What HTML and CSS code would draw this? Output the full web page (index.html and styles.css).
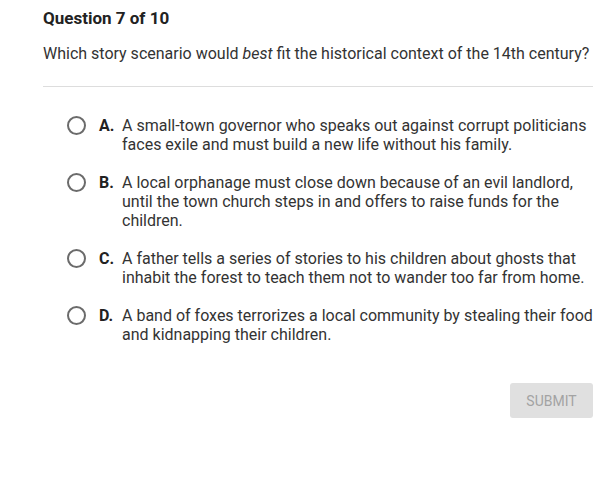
FILE: index.html
```html
<!DOCTYPE html>
<html>
<head>
<meta charset="utf-8">
<link rel="stylesheet" href="styles.css">
</head>
<body>
<div class="quiz">
  <h1 class="title">Question 7 of 10</h1>
  <p class="prompt">Which story scenario would <em>best</em> fit the historical context of the 14th century?</p>
  <hr class="divider">
  <ul class="options">
    <li class="option"><span class="radio"></span><span class="letter">A.</span><span class="text">A small-town governor who speaks out against corrupt politicians faces exile and must build a new life without his family.</span></li>
    <li class="option"><span class="radio"></span><span class="letter">B.</span><span class="text">A local orphanage must close down because of an evil landlord, until the town church steps in and offers to raise funds for the children.</span></li>
    <li class="option"><span class="radio"></span><span class="letter">C.</span><span class="text">A father tells a series of stories to his children about ghosts that inhabit the forest to teach them not to wander too far from home.</span></li>
    <li class="option"><span class="radio"></span><span class="letter">D.</span><span class="text">A band of foxes terrorizes a local community by stealing their food and kidnapping their children.</span></li>
  </ul>
  <div class="actions"><button class="submit" disabled>SUBMIT</button></div>
</div>
</body>
</html>
```
FILE: styles.css
```css
html, body {
  margin: 0;
  padding: 0;
  background: #ffffff;
}
body {
  font-family: Roboto, "Liberation Sans", sans-serif;
  color: #333333;
}
.quiz {
  width: 550px;
  padding: 8px 0 0 43px;
}
.title {
  margin: 0;
  font-size: 17px;
  line-height: 20px;
  font-weight: 700;
  color: #222222;
}
.prompt {
  margin: 16px 0 0 0;
  font-size: 16px;
  line-height: 20px;
}
.prompt em {
  font-style: italic;
}
.divider {
  margin: 22px 0 0 0;
  border: 0;
  border-top: 1px solid #dddddd;
  height: 0;
}
.options {
  list-style: none;
  margin: 29px 0 0 0;
  padding: 0 0 0 24px;
  display: flex;
  flex-direction: column;
  gap: 19px;
}
.option {
  display: flex;
  align-items: flex-start;
  font-size: 16px;
  line-height: 19px;
}
.radio {
  flex: none;
  width: 15px;
  height: 15px;
  border: 2px solid #6b6b6b;
  border-radius: 50%;
  margin: 0 13px 0 0;
}
.letter {
  flex: none;
  width: 23px;
  font-weight: 700;
  color: #222222;
}
.text {
  flex: 1;
}
.actions {
  display: flex;
  justify-content: flex-end;
  margin-top: 39px;
}
.submit {
  width: 83px;
  height: 35px;
  border: 0;
  border-radius: 3px;
  background: #e0e0e0;
  color: #a3a3a3;
  font-family: Roboto, "Liberation Sans", sans-serif;
  font-size: 14px;
  padding: 0;
}
```
